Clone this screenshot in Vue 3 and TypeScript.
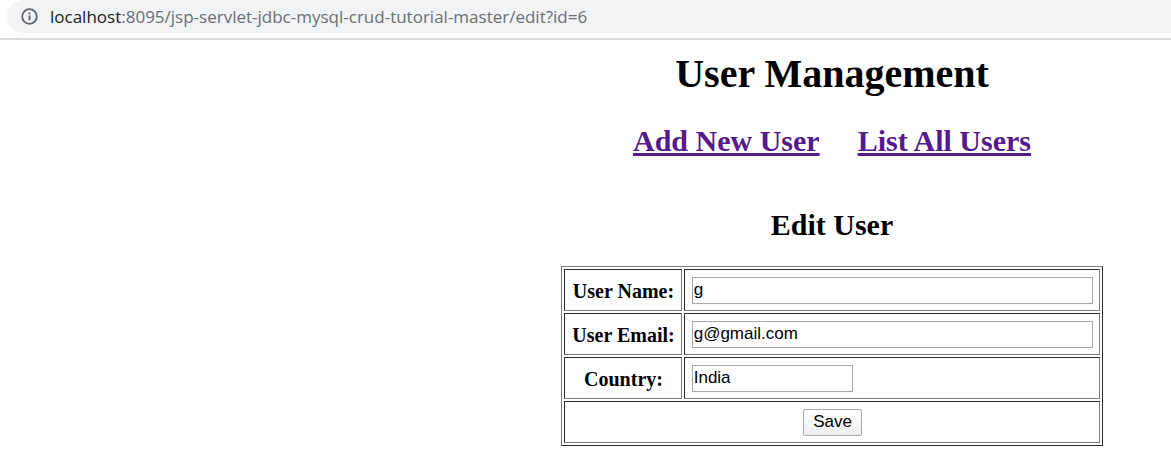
<script setup lang="ts">
import { ref } from 'vue'

interface Field {
  id: string
  label: string
  value: string
  wide: boolean
}

const fields = ref<Field[]>([
  { id: 'name', label: 'User Name:', value: 'g', wide: true },
  { id: 'email', label: 'User Email:', value: 'g@gmail.com', wide: true },
  { id: 'country', label: 'Country:', value: 'India', wide: false },
])
</script>

<template>
  <header class="toolbar">
    <div class="address">
      <svg class="info" viewBox="0 0 16 16" aria-hidden="true">
        <circle cx="8" cy="8" r="6.9" fill="none" stroke="#5f6368" stroke-width="1.7" />
        <path d="M7.1 7h1.8v4.6H7.1zM7.1 4.2h1.8v1.7H7.1z" fill="#5f6368" />
      </svg>
      <span class="url"><span class="host">localhost</span>:8095/jsp-servlet-jdbc-mysql-crud-tutorial-master/edit?id=6</span>
    </div>
  </header>
  <main class="page">
    <h1>User Management</h1>
    <h2 class="links">
      <a href="#new">Add New User</a>
      <a href="#list">List All Users</a>
    </h2>
    <form @submit.prevent>
      <table>
        <caption><h2>Edit User</h2></caption>
        <tbody>
          <tr v-for="field in fields" :key="field.id">
            <th scope="row"><label :for="field.id">{{ field.label }}</label></th>
            <td><input :id="field.id" v-model="field.value" type="text" :class="{ wide: field.wide }" /></td>
          </tr>
          <tr>
            <td class="actions" colspan="2"><button type="submit">Save</button></td>
          </tr>
        </tbody>
      </table>
    </form>
  </main>
</template>

<style>
body {
  background: #fff;
}
</style>

<style scoped>
.toolbar {
  padding: 0 0 5px 7px;
  border-bottom: 2px solid #dadce0;
}

.address {
  display: flex;
  align-items: center;
  gap: 12px;
  height: 33px;
  padding-left: 14px;
  border-radius: 17px 0 0 17px;
  background: #f1f3f4;
}

.info {
  width: 17px;
  height: 17px;
}

.url {
  color: #6b6f74;
  font: 17px/24px "Open Sans", sans-serif;
  white-space: nowrap;
}

.host {
  color: #202124;
}

.page {
  display: flex;
  flex-direction: column;
  align-items: center;
  padding: 11px 0 28px 493px;
  color: #000;
  font-family: "Liberation Serif", serif;
}

h1,
h2 {
  margin: 0;
}

h1 {
  font-size: 40px;
  line-height: 46px;
}

h2 {
  font-size: 30px;
  line-height: 34px;
}

.links {
  display: flex;
  gap: 38px;
  margin: 27px 0 50px;
}

.links a {
  color: #551a8b;
  text-decoration-thickness: 3px;
}

table {
  border: 1px solid;
  border-color: #808080 #2c2c2c #2c2c2c #808080;
  border-collapse: separate;
  border-spacing: 2px;
  font-size: 20px;
}

caption {
  padding-bottom: 24px;
}

th,
td {
  height: 40px;
  padding: 0 6px 0 7px;
  border: 1px solid;
  border-color: #2c2c2c #808080 #808080 #2c2c2c;
}

th {
  height: 38px;
  padding-top: 2px;
}

td {
  text-align: left;
}

input,
button {
  display: block;
  box-sizing: border-box;
  height: 27px;
  border: 1px solid #a9a9a9;
  color: #000;
  font: 17px/20px "Liberation Sans", sans-serif;
}

input {
  width: 161px;
  padding: 0 1px;
  background: #fff;
}

input.wide {
  width: 401px;
}

button {
  margin: 0 auto;
  padding: 0 9px;
  border-radius: 2px;
  background: linear-gradient(#fff, #eee);
}
</style>
